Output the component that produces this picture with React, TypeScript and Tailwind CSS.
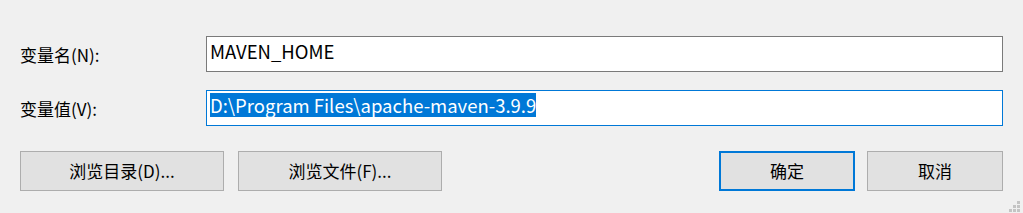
const font = { fontFamily: '"Noto Sans CJK SC", sans-serif' };

const Field = ({ label, value, focused }: { label: string; value: string; focused?: boolean }) => (
  <div className="flex items-center h-[36px]">
    <div className="w-[186px] text-[17px] text-black leading-none">{label}</div>
    <div
      className={`flex-1 h-full flex items-start pt-[2px] bg-white px-[3px] border ${
        focused ? "border-[#0078d7]" : "border-[#7a7a7a]"
      }`}
    >
      <span
        className={`text-[18.5px] leading-[24px] h-[24px] ${
          focused ? "bg-[#0078d7] text-white" : "text-black"
        }`}
      >
        {value}
      </span>
    </div>
  </div>
);

const Button = ({ children, primary, w }: { children: string; primary?: boolean; w: string }) => (
  <button
    className={`${w} h-[40px] bg-[#e1e1e1] text-[17px] text-black flex items-center justify-center ${
      primary ? "border-2 border-[#0078d7]" : "border border-[#adadad]"
    }`}
  >
    {children}
  </button>
);

export default function App() {
  return (
    <div className="relative w-[1023px] h-[213px] bg-[#f0f0f0] px-[20px] pt-[36px]" style={font}>
      <div className="flex flex-col gap-[18px]">
        <Field label="变量名(N):" value="MAVEN_HOME" />
        <Field label="变量值(V):" value="D:\Program Files\apache-maven-3.9.9" focused />
      </div>
      <div className="flex mt-[25px]">
        <div className="flex gap-[14px]">
          <Button w="w-[204px]">浏览目录(D)...</Button>
          <Button w="w-[204px]">浏览文件(F)...</Button>
        </div>
        <div className="flex gap-[12px] ml-auto">
          <Button w="w-[136px]" primary>
            确定
          </Button>
          <Button w="w-[136px]">取消</Button>
        </div>
      </div>
      <svg className="absolute right-[3px] bottom-[1px]" width="11" height="11" viewBox="0 0 11 11">
        <g fill="#c4c4c4">
          <rect x="8" y="0" width="3" height="3" />
          <rect x="4" y="4" width="3" height="3" />
          <rect x="8" y="4" width="3" height="3" />
          <rect x="0" y="8" width="3" height="3" />
          <rect x="4" y="8" width="3" height="3" />
          <rect x="8" y="8" width="3" height="3" />
        </g>
      </svg>
    </div>
  );
}
